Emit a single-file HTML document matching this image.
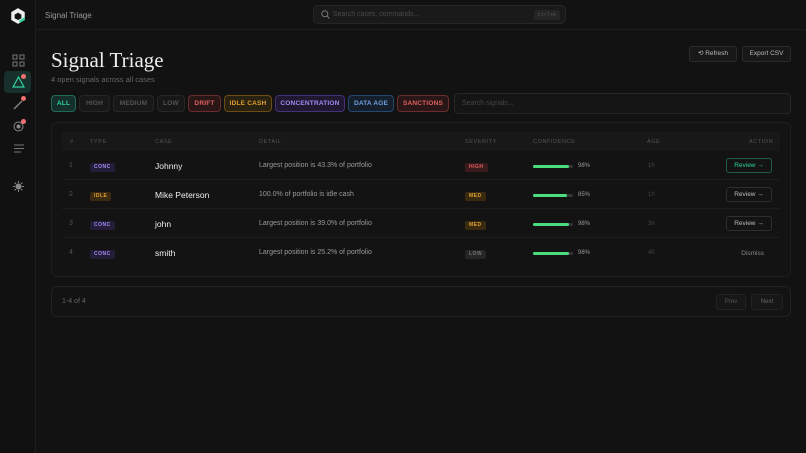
<!DOCTYPE html><html><head><style>
*{box-sizing:border-box;margin:0;padding:0}
body{width:806px;height:453px;background:#121212;font-family:"Liberation Sans",sans-serif;color:#ddd;position:relative;overflow:hidden}
.abs{position:absolute}
.side{left:0;top:0;width:36px;height:453px;border-right:1px solid #1e1e1e;background:#111}
.top{left:36px;top:0;right:0;height:30px;border-bottom:1px solid #1e1e1e}
.chip{position:absolute;top:95px;height:17px;border-radius:4px;font-size:6.5px;font-weight:bold;letter-spacing:.2px;line-height:15px;text-align:center;border:1px solid;white-space:nowrap}
.th{position:absolute;top:139px;font-size:5.5px;letter-spacing:.6px;color:#555}
.row{position:absolute;left:62px;width:718px;height:29px;border-bottom:1px solid #1d1d1d}
.c{position:absolute;font-size:7px;color:#9a9a9a}
.tag{position:absolute;font-size:5px;font-weight:bold;letter-spacing:.5px;padding:1px 4px;border-radius:2px;line-height:7px}
.bar{position:absolute;left:471px;top:14px;width:40px;height:3px;background:#333;border-radius:2px}
.bar i{display:block;height:3px;background:#4ade80;border-radius:2px}
.btn{position:absolute;right:8px;top:7px;width:46px;height:15px;border:1px solid #2e2e2e;border-radius:3px;font-size:6.5px;color:#bbb;text-align:center;line-height:13px}
</style></head><body>
<div class="abs side">
<svg class="abs" style="left:9px;top:7px" width="18" height="18" viewBox="0 0 16 16"><polygon points="8,1 14,4.5 14,11.5 8,15 2,11.5 2,4.5" fill="#eee"/><polygon points="8,5 11,6.8 11,10 8,11.5 5,10 5,6.8" fill="#111"/><polygon points="9,12 14,9 14,11.5 9.5,14" fill="#2dd4a0"/></svg>
<svg class="abs" style="left:12px;top:54px" width="13" height="13" viewBox="0 0 13 13" fill="none" stroke="#777" stroke-width="1"><rect x="1" y="1" width="4" height="4"/><rect x="8" y="1" width="4" height="4"/><rect x="1" y="8" width="4" height="4"/><rect x="8" y="8" width="4" height="4"/></svg>
<div class="abs" style="left:4px;top:71px;width:27px;height:22px;background:#17302b;border-radius:4px"></div>
<svg class="abs" style="left:12px;top:76px" width="13" height="12" viewBox="0 0 13 12" fill="none" stroke="#2dd4a0" stroke-width="1.2"><polygon points="6.5,1 12,11 1,11"/></svg>
<div class="abs" style="left:21px;top:74px;width:5px;height:5px;border-radius:50%;background:#f07070"></div>
<svg class="abs" style="left:13px;top:98px" width="12" height="12" viewBox="0 0 12 12" stroke="#888" stroke-width="1.3"><line x1="1" y1="11" x2="9" y2="3"/></svg>
<div class="abs" style="left:21px;top:96px;width:5px;height:5px;border-radius:50%;background:#f07070"></div>
<svg class="abs" style="left:13px;top:121px" width="11" height="11" viewBox="0 0 11 11" fill="none" stroke="#888"><circle cx="5.5" cy="5.5" r="4.5"/><circle cx="5.5" cy="5.5" r="1.5" fill="#888"/></svg>
<div class="abs" style="left:21px;top:119px;width:5px;height:5px;border-radius:50%;background:#f07070"></div>
<svg class="abs" style="left:14px;top:144px" width="10" height="9" viewBox="0 0 10 9" stroke="#777"><line x1="0" y1="1" x2="10" y2="1"/><line x1="0" y1="4.5" x2="10" y2="4.5"/><line x1="0" y1="8" x2="7" y2="8"/></svg>
<svg class="abs" style="left:13px;top:181px" width="11" height="11" viewBox="0 0 11 11" stroke="#888"><circle cx="5.5" cy="5.5" r="2.5" fill="#888"/><path d="M5.5 0v2M5.5 9v2M0 5.5h2M9 5.5h2M1.6 1.6l1.4 1.4M8 8l1.4 1.4M1.6 9.4L3 8M8 3l1.4-1.4"/></svg>
</div>
<div class="abs top">
<div class="abs" style="left:9px;top:11px;font-size:8px;color:#999">Signal Triage</div>
<div class="abs" style="left:277px;top:5px;width:253px;height:19px;background:#1a1a1a;border:1px solid #262626;border-radius:5px">
<svg class="abs" style="left:7px;top:4px" width="9" height="9" viewBox="0 0 9 9" fill="none" stroke="#777"><circle cx="3.8" cy="3.8" r="3"/><line x1="6" y1="6" x2="8.5" y2="8.5"/></svg>
<div class="abs" style="left:19px;top:5px;font-size:7px;color:#4a4a4a">Search cases, commands...</div>
<div class="abs" style="left:220px;top:4px;width:26px;height:10px;background:#252525;border-radius:2px;font-size:5px;color:#555;text-align:center;line-height:10px;font-family:'Liberation Mono',monospace">Ctrl+K</div>
</div></div>
<div class="abs" style="left:51px;top:48px;font-family:'Liberation Serif',serif;font-size:21px;color:#eee">Signal Triage</div>
<div class="abs" style="left:51px;top:75px;font-size:7.5px;color:#666">4 open signals across all cases</div>
<div class="abs" style="left:689px;top:46px;width:48px;height:16px;border:1px solid #2a2a2a;background:#181818;border-radius:3px;font-size:6.5px;color:#bbb;line-height:14px;text-align:center">⟲ Refresh</div>
<div class="abs" style="left:742px;top:46px;width:49px;height:16px;border:1px solid #2a2a2a;background:#181818;border-radius:3px;font-size:6.5px;color:#bbb;line-height:14px;text-align:center">Export CSV</div>
<div class="chip" style="left:51px;width:25px;color:#2dd4a0;border-color:#1f6b58;background:#15302a">ALL</div>
<div class="chip" style="left:79px;width:31px;color:#555;border-color:#262626;background:#181818">HIGH</div>
<div class="chip" style="left:113px;width:41px;color:#555;border-color:#262626;background:#181818">MEDIUM</div>
<div class="chip" style="left:157px;width:28px;color:#555;border-color:#262626;background:#181818">LOW</div>
<div class="chip" style="left:188px;width:33px;color:#e06060;border-color:#6a2c2c;background:#2a1616">DRIFT</div>
<div class="chip" style="left:224px;width:48px;color:#e0a030;border-color:#6a4c14;background:#2a2210">IDLE CASH</div>
<div class="chip" style="left:275px;width:70px;color:#a08cf0;border-color:#45307a;background:#1e1830">CONCENTRATION</div>
<div class="chip" style="left:348px;width:46px;color:#70a0e0;border-color:#264870;background:#151f2c">DATA AGE</div>
<div class="chip" style="left:397px;width:52px;color:#e06060;border-color:#6a2c2c;background:#2a1616">SANCTIONS</div>
<div class="abs" style="left:454px;top:93px;width:337px;height:21px;border:1px solid #262626;background:#151515;border-radius:4px;font-size:7px;color:#444;padding:6px 7px">Search signals...</div>
<div class="abs" style="left:51px;top:122px;width:740px;height:155px;border:1px solid #1e1e1e;border-radius:6px;background:#131313"></div>
<div class="abs" style="left:62px;top:132px;width:718px;height:19px;background:#181818"></div>
<div class="th" style="left:70px">#</div><div class="th" style="left:90px">TYPE</div><div class="th" style="left:155px">CASE</div><div class="th" style="left:259px">DETAIL</div><div class="th" style="left:465px">SEVERITY</div><div class="th" style="left:533px">CONFIDENCE</div><div class="th" style="left:647px">AGE</div><div class="th" style="left:749px">ACTION</div>
<div class="row" style="top:151px"><div class="c" style="left:7px;top:11px;color:#555">1</div><div class="tag" style="left:28px;top:12px;background:#241d3a;color:#a08cf0">CONC</div><div class="c" style="left:93px;top:10px;font-size:8.5px;color:#eee">Johnny</div><div class="c" style="left:197px;top:11px">Largest position is 43.3% of portfolio</div><div class="tag" style="left:403px;top:12px;background:#3a1a1a;color:#e06060">HIGH</div><div class="bar"><i style="width:36px"></i></div><div class="c" style="left:516px;top:12px;font-size:6px">98%</div><div class="c" style="left:586px;top:12px;color:#444;font-size:6px">1h</div><div class="btn" style="color:#2dd4a0;border-color:#1f5a4a">Review →</div></div>
<div class="row" style="top:180px"><div class="c" style="left:7px;top:11px;color:#555">2</div><div class="tag" style="left:28px;top:12px;background:#3a2a10;color:#e0a030">IDLE</div><div class="c" style="left:93px;top:10px;font-size:8.5px;color:#eee">Mike Peterson</div><div class="c" style="left:197px;top:11px">100.0% of portfolio is idle cash</div><div class="tag" style="left:403px;top:12px;background:#3a2a10;color:#e0a030">MED</div><div class="bar"><i style="width:34px"></i></div><div class="c" style="left:516px;top:12px;font-size:6px">85%</div><div class="c" style="left:586px;top:12px;color:#444;font-size:6px">1h</div><div class="btn">Review →</div></div>
<div class="row" style="top:209px"><div class="c" style="left:7px;top:11px;color:#555">3</div><div class="tag" style="left:28px;top:12px;background:#241d3a;color:#a08cf0">CONC</div><div class="c" style="left:93px;top:10px;font-size:8.5px;color:#eee">john</div><div class="c" style="left:197px;top:11px">Largest position is 39.0% of portfolio</div><div class="tag" style="left:403px;top:12px;background:#3a2a10;color:#e0a030">MED</div><div class="bar"><i style="width:36px"></i></div><div class="c" style="left:516px;top:12px;font-size:6px">98%</div><div class="c" style="left:586px;top:12px;color:#444;font-size:6px">3h</div><div class="btn">Review →</div></div>
<div class="row" style="top:238px;border:none"><div class="c" style="left:7px;top:11px;color:#555">4</div><div class="tag" style="left:28px;top:12px;background:#241d3a;color:#a08cf0">CONC</div><div class="c" style="left:93px;top:10px;font-size:8.5px;color:#eee">smith</div><div class="c" style="left:197px;top:11px">Largest position is 25.2% of portfolio</div><div class="tag" style="left:403px;top:12px;background:#262626;color:#777">LOW</div><div class="bar"><i style="width:36px"></i></div><div class="c" style="left:516px;top:12px;font-size:6px">98%</div><div class="c" style="left:586px;top:12px;color:#444;font-size:6px">4h</div><div class="c" style="right:16px;top:12px;font-size:6.5px;color:#888">Dismiss</div></div>
<div class="abs" style="left:51px;top:286px;width:740px;height:31px;border:1px solid #222;border-radius:6px;background:#131313">
<div class="abs" style="left:10px;top:11px;font-size:7px;color:#666">1-4 of 4</div>
<div class="abs" style="left:664px;top:7px;width:30px;height:16px;border:1px solid #222;background:#171717;border-radius:3px;font-size:6px;color:#555;text-align:center;line-height:14px">Prev</div>
<div class="abs" style="left:699px;top:7px;width:32px;height:16px;border:1px solid #222;background:#171717;border-radius:3px;font-size:6px;color:#666;text-align:center;line-height:14px">Next</div>
</div>
</body></html>
